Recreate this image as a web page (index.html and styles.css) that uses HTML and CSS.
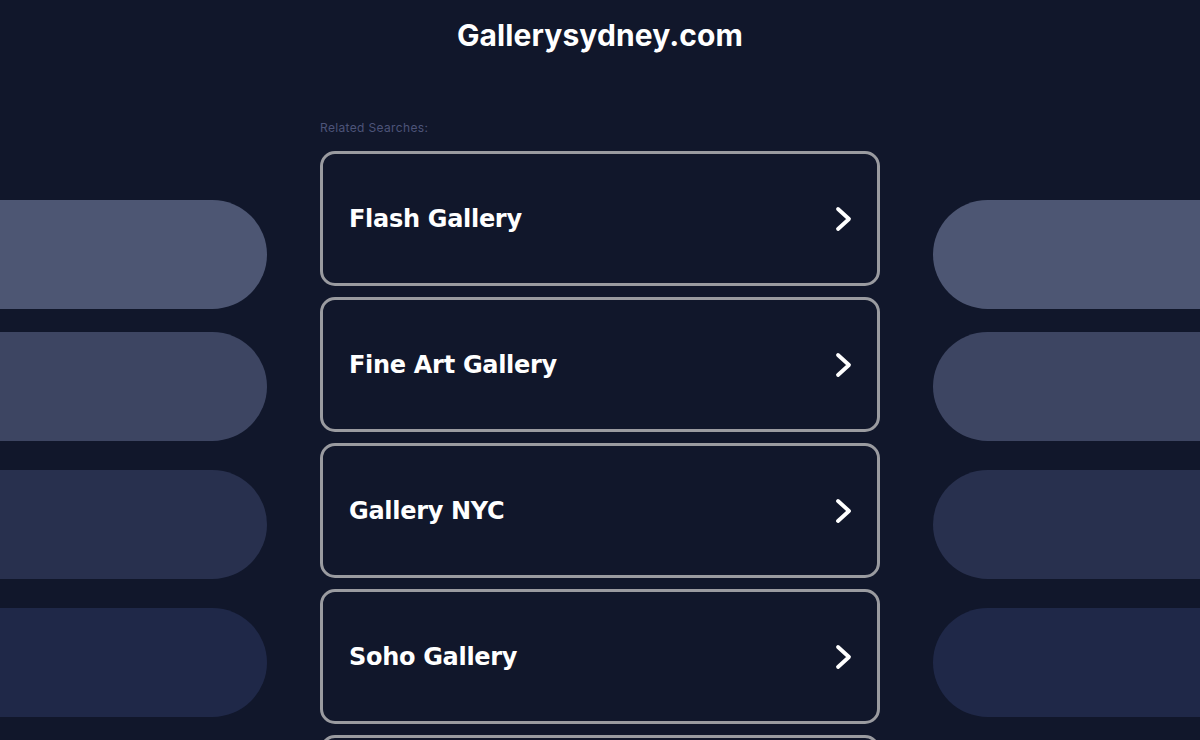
FILE: index.html
```html
<!DOCTYPE html>
<html>
<head>
<meta charset="utf-8">
<link rel="stylesheet" href="styles.css">
</head>
<body>
<header class="header"><h1 class="title">Gallerysydney.com</h1></header>
<div class="layout">
  <div class="side side-left">
    <div class="pill pill-1"></div>
    <div class="pill pill-2"></div>
    <div class="pill pill-3"></div>
    <div class="pill pill-4"></div>
  </div>
  <main class="center">
    <div class="related">Related Searches:</div>
    <div class="cards">
      <a class="card" href="#"><span class="card-text">Flash Gallery</span><svg class="chev" viewBox="0 0 18 26" width="18" height="26"><path d="M3 3 L14 13 L3 23" fill="none" stroke="#fff" stroke-width="3.8" stroke-linecap="round" stroke-linejoin="round"/></svg></a>
      <a class="card" href="#"><span class="card-text">Fine Art Gallery</span><svg class="chev" viewBox="0 0 18 26" width="18" height="26"><path d="M3 3 L14 13 L3 23" fill="none" stroke="#fff" stroke-width="3.8" stroke-linecap="round" stroke-linejoin="round"/></svg></a>
      <a class="card" href="#"><span class="card-text">Gallery NYC</span><svg class="chev" viewBox="0 0 18 26" width="18" height="26"><path d="M3 3 L14 13 L3 23" fill="none" stroke="#fff" stroke-width="3.8" stroke-linecap="round" stroke-linejoin="round"/></svg></a>
      <a class="card" href="#"><span class="card-text">Soho Gallery</span><svg class="chev" viewBox="0 0 18 26" width="18" height="26"><path d="M3 3 L14 13 L3 23" fill="none" stroke="#fff" stroke-width="3.8" stroke-linecap="round" stroke-linejoin="round"/></svg></a>
      <a class="card card-partial" href="#" aria-label="More"></a>
    </div>
  </main>
  <div class="side side-right">
    <div class="pill pill-1"></div>
    <div class="pill pill-2"></div>
    <div class="pill pill-3"></div>
    <div class="pill pill-4"></div>
  </div>
</div>
</body>
</html>
```
FILE: styles.css
```css
html, body {
  margin: 0;
  padding: 0;
  background: #11172b;
  overflow: hidden;
  height: 740px;
}
body {
  font-family: "DejaVu Sans", Verdana, sans-serif;
}
.header {
  height: 70px;
  display: flex;
  justify-content: center;
  align-items: center;
}
.title {
  margin: 0;
  font-family: "Inter", "Open Sans", sans-serif;
  font-weight: 700;
  font-size: 30px;
  color: #ffffff;
  letter-spacing: 0.1px;
}
.layout {
  display: grid;
  grid-template-columns: 267px 560px 267px;
  justify-content: space-between;
}
.side {
  display: flex;
  flex-direction: column;
  padding-top: 130px;
}
.pill {
  height: 109px;
  margin-bottom: 29px;
}
.pill-1 { background: #4d5673; margin-bottom: 23px; }
.pill-2 { background: #3d4562; }
.pill-3 { background: #28304e; }
.pill-4 { background: #1f2848; }
.side-left .pill { border-radius: 0 55px 55px 0; }
.side-right .pill { border-radius: 55px 0 0 55px; }
.center {
  padding-top: 51px;
}
.related {
  font-family: "Inter", "Open Sans", sans-serif;
  font-size: 12px;
  letter-spacing: 0.35px;
  color: #4d5479;
  height: 30px;
  line-height: 14px;
}
.cards {
  display: flex;
  flex-direction: column;
  gap: 11px;
}
.card {
  box-sizing: border-box;
  height: 135px;
  border: 3px solid #9a9ba0;
  border-radius: 15px;
  display: flex;
  align-items: center;
  justify-content: space-between;
  padding: 0 24px 0 26px;
  text-decoration: none;
  background: #11172b;
}
.card-text {
  color: #ffffff;
  font-family: "DejaVu Sans", Verdana, sans-serif;
  font-weight: 700;
  font-size: 24px;
  letter-spacing: -0.3px;
}
.chev {
  display: block;
}
```
